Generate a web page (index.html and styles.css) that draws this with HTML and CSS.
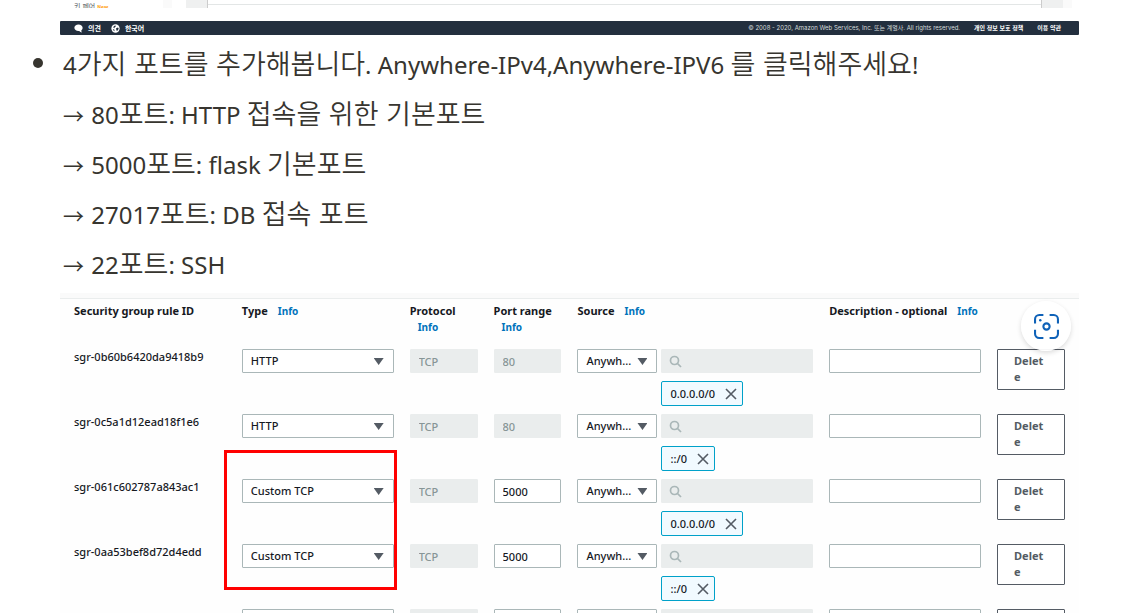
FILE: index.html
```html
<!DOCTYPE html>
<html lang="ko">
<head>
<meta charset="utf-8">
<title>포트 추가하기</title>
<link rel="stylesheet" href="styles.css">
</head>
<body>
<main class="article">
  <section class="console-end">
    <div class="console-strip">
      <span class="side-item">키 페어 <b class="new">New</b></span>
      <span class="gutter"></span>
      <span class="edge edge-left"></span>
      <span class="pane"></span>
      <span class="edge edge-right"></span>
      <span class="gutter gutter-right"></span>
    </div>
    <footer class="console-footer">
      <a href="#" class="foot-link foot-main"><svg class="foot-icon" viewBox="0 0 10 10"><path d="M5 .6C2.400.6.4 2 .4 4.200S2.400 7.800 5 7.800h.8C6.600 8.800 7.600 9.400 8.800 9.500 8.200 8.800 8.100 8 8.200 7 9.100 6.300 9.600 5.300 9.600 4.200 9.600 2 7.600.6 5 .6z" fill="#fff"/></svg>의견</a>
      <a href="#" class="foot-link foot-main"><svg class="foot-icon" viewBox="0 0 10 10"><circle cx="5" cy="5" r="4.600" fill="#fff"/><path d="M3.200 2.200 5 1.600l.6 1-1.400.8-.4 1.200L2.600 4.200zM5.600 4.600 7.800 4l.8 1.400-1.400 2.200-1.200-.4-.2-1.400zM2 5.600l1.600.6.4 1.800-1-.4z" fill="#232f3e"/></svg>한국어</a>
      <span class="copyright">© 2008 - 2020, Amazon Web Services, Inc. 또는 계열사. All rights reserved.</span>
      <a href="#" class="foot-link">개인 정보 보호 정책</a>
      <a href="#" class="foot-link">이용 약관</a>
    </footer>
  </section>

  <ul class="notes">
    <li class="note">
      <p><span class="latin">4</span>가지 포트를 추가해봅니다<span class="latin">. Anywhere-IPv4,Anywhere-IPV6 </span>를 클릭해주세요<span class="latin">!</span></p>
      <p><span class="arrow">→</span><span class="latin"> 80</span>포트<span class="latin">: HTTP </span>접속을 위한 기본포트</p>
      <p><span class="arrow">→</span><span class="latin"> 5000</span>포트<span class="latin">: flask </span>기본포트</p>
      <p><span class="arrow">→</span><span class="latin"> 27017</span>포트<span class="latin">: DB </span>접속 포트</p>
      <p><span class="arrow">→</span><span class="latin"> 22</span>포트<span class="latin">: SSH</span></p>
    </li>
  </ul>

  <section class="rules">
    <table class="rule-table">
      <colgroup><col class="c2"><col class="c2"><col class="c1"><col class="c1"><col class="c3"><col class="c2"><col class="c1"></colgroup>
      <thead>
        <tr>
          <th>Security group rule ID</th>
          <th>Type<a href="#" class="info">Info</a></th>
          <th>Protocol <a href="#" class="info">Info</a></th>
          <th>Port range <a href="#" class="info">Info</a></th>
          <th>Source<a href="#" class="info">Info</a></th>
          <th>Description - optional<a href="#" class="info">Info</a></th>
          <td></td>
        </tr>
      </thead>
      <tbody id="rules"></tbody>
    </table>
    <div class="highlight"></div>
    <button class="lens" aria-label="Visual search">
      <svg viewBox="0 0 24 24" fill="none" stroke="#0f62b8" stroke-width="2"><path d="M1 9V5a4 4 0 0 1 4-4h4M15 1h4a4 4 0 0 1 4 4v4M23 15v4a4 4 0 0 1-4 4h-4M9 23H5a4 4 0 0 1-4-4v-4"/><circle cx="12" cy="12" r="3"/><circle cx="6" cy="6" r="1.200" fill="#0f62b8" stroke="none"/></svg>
    </button>
  </section>
</main>
<script src="rules.js"></script>
</body>
</html>
```
FILE: styles.css
```css
* { box-sizing: border-box; }
body { margin: 0; background: #fff; overflow: hidden; font-family: "Noto Sans", "Noto Sans CJK KR", sans-serif; }
.article { padding-right: 42px; }
a { text-decoration: none; }

.console-end { margin-left: 60px; }
.console-strip { display: flex; height: 8px; overflow: hidden; font: 7px/12px "Noto Sans CJK KR", sans-serif; color: #545b64; }
.side-item { width: 103px; padding-left: 14px; white-space: nowrap; }
.new { color: #f90; font-size: 5px; }
.gutter { width: 9px; background: #fafafa; }
.edge { width: 22px; background: #eff0f0; }
.edge-left { margin-left: 14px; border-right: 1px solid #ccc; }
.pane { flex: 1; height: 5px; border-bottom: 1px solid #e3e6e6; }
.edge-right { border-left: 1px solid #ccc; }
.gutter-right { margin-right: 7px; }
.console-footer { display: flex; align-items: center; gap: 14px; height: 14px; margin-top: 13px; padding: 0 18px 0 14px; background: #232f3e; border-radius: 1px; font: 6px/14px "Noto Sans CJK KR", sans-serif; }
.foot-link { display: flex; align-items: center; gap: 5px; color: #fff; font-weight: 700; }
.foot-main { margin-right: -4px; font-size: 7px; }
.foot-icon { width: 9px; height: 9px; }
.copyright { margin-left: auto; color: #d5dbdb; font-family: Inter, "Noto Sans CJK KR", sans-serif; }

.notes { margin: 0; padding: 3px 0 0 33px; list-style: none; color: #37352f; font-family: "Noto Sans CJK KR", sans-serif; font-size: 27px; font-weight: 350; line-height: 50px; }
.note { display: grid; grid-template-columns: 10px 1fr; column-gap: 20px; }
.note::before { content: ""; height: 10px; margin-top: 20px; border-radius: 50%; background: #37352f; }
.note p { grid-column: 2; height: 50px; margin: 0; white-space: nowrap; }
.latin { font-family: "Noto Sans", sans-serif; font-size: 24px; font-weight: 400; line-height: 48px; }
.arrow { margin-right: 1px; font-family: "Noto Sans", "Noto Sans CJK KR", sans-serif; font-size: 21px; font-weight: 400; line-height: 48px; }

.rules { position: relative; margin: 5px 0 0 60px; padding: 0 6px; border-top: 5px solid #fafafa; box-shadow: inset 0 1px #eaeded; background: #fefefe; font-size: 11px; font-weight: 500; line-height: 16px; color: #16191f; }
.rule-table { width: 100%; table-layout: fixed; border-collapse: collapse; }
.c1 { width: 8.333%; }
.c2 { width: 16.667%; }
.c3 { width: 25%; }
th, td { padding: 0 8px; text-align: left; vertical-align: top; }
thead tr { height: 51px; }
th { padding-top: 5px; font-weight: 700; }
.info { margin-left: 10px; color: #0073bb; font-size: 10px; }
th:nth-child(3) .info, th:nth-child(4) .info { display: block; margin-left: 8px; }
tbody tr { height: 65px; }
.field { display: block; width: 100%; height: 24px; padding: 0 8px; border: 1px solid #aab7b8; border-radius: 1px; background: #fff; color: #16191f; font: inherit; appearance: none; }
.field:disabled { border-color: #eaeded; background: #eaeded; color: #879596; opacity: 1; }
.pick { position: relative; display: block; }
.pick::after { content: ""; position: absolute; right: 10px; top: 9px; width: 10px; height: 7px; background: #545b64; clip-path: polygon(0 0, 100% 0, 50% 100%); }
.source { display: grid; grid-template-columns: 80px 1fr; column-gap: 4px; row-gap: 8px; }
.search { position: relative; }
.search svg { position: absolute; left: 8px; top: 6px; width: 13px; height: 13px; }
.token { grid-column: 2; justify-self: start; display: flex; align-items: center; gap: 10px; height: 25px; padding: 0 5px 0 8px; border: 1px solid #00a1c9; border-radius: 2px; background: #f1faff; }
.token button { display: flex; padding: 0; border: 0; background: none; }
.token svg { width: 12px; height: 12px; }
.delete { display: block; width: 100%; height: 41px; padding: 3px 16px 5px; border: 1px solid #545b64; border-radius: 1px; background: #fff; color: #545b64; font: inherit; font-weight: 700; text-align: left; word-break: break-all; }
.highlight { position: absolute; left: 164px; top: 152px; width: 173px; height: 140px; border: 3px solid #f00; }
.lens { position: absolute; right: 8px; top: 3px; display: grid; place-items: center; width: 50px; height: 50px; padding: 0; border: 0; border-radius: 50%; background: rgba(255, 255, 255, .95); box-shadow: 0 2px 5px rgba(0, 0, 0, .14); }
.lens svg { width: 25px; height: 25px; }
```
FILE: rules.js
```javascript
const rules = [
  { id: "sgr-0b60b6420da9418b9", type: "HTTP", port: "80", cidr: "0.0.0.0/0" },
  { id: "sgr-0c5a1d12ead18f1e6", type: "HTTP", port: "80", cidr: "::/0" },
  { id: "sgr-061c602787a843ac1", type: "Custom TCP", port: "5000", cidr: "0.0.0.0/0" },
  { id: "sgr-0aa53bef8d72d4edd", type: "Custom TCP", port: "5000", cidr: "::/0" },
  { id: "", type: "", port: "", cidr: "" }
];
document.getElementById("rules").innerHTML = rules.map(r => `
<tr>
  <td>${r.id}</td>
  <td><span class="pick"><select class="field" aria-label="Type"><option>${r.type}</option></select></span></td>
  <td><input class="field" aria-label="Protocol" value="${r.id ? "TCP" : ""}" disabled></td>
  <td><input class="field" aria-label="Port range" value="${r.port}" ${r.port === "80" ? "disabled" : ""}></td>
  <td><div class="source">
    <span class="pick"><select class="field" aria-label="Source"><option>${r.id ? "Anywh..." : ""}</option></select></span>
    <span class="search"><input class="field" aria-label="Source search" disabled><svg viewBox="0 0 13 13" fill="none" stroke="#aab7b8" stroke-width="1.7"><circle cx="5.5" cy="5.5" r="4"/><path d="M8.500 8.500 12 12"/></svg></span>
    ${r.cidr ? `<span class="token">${r.cidr}<button aria-label="Remove"><svg viewBox="0 0 12 12" stroke="#545b64" stroke-width="1.6"><path d="M1 1l10 10M11 1 1 11"/></svg></button></span>` : ""}
  </div></td>
  <td><input class="field" aria-label="Description"></td>
  <td><button class="delete">${r.id ? "Delete" : ""}</button></td>
</tr>`).join("");
```
